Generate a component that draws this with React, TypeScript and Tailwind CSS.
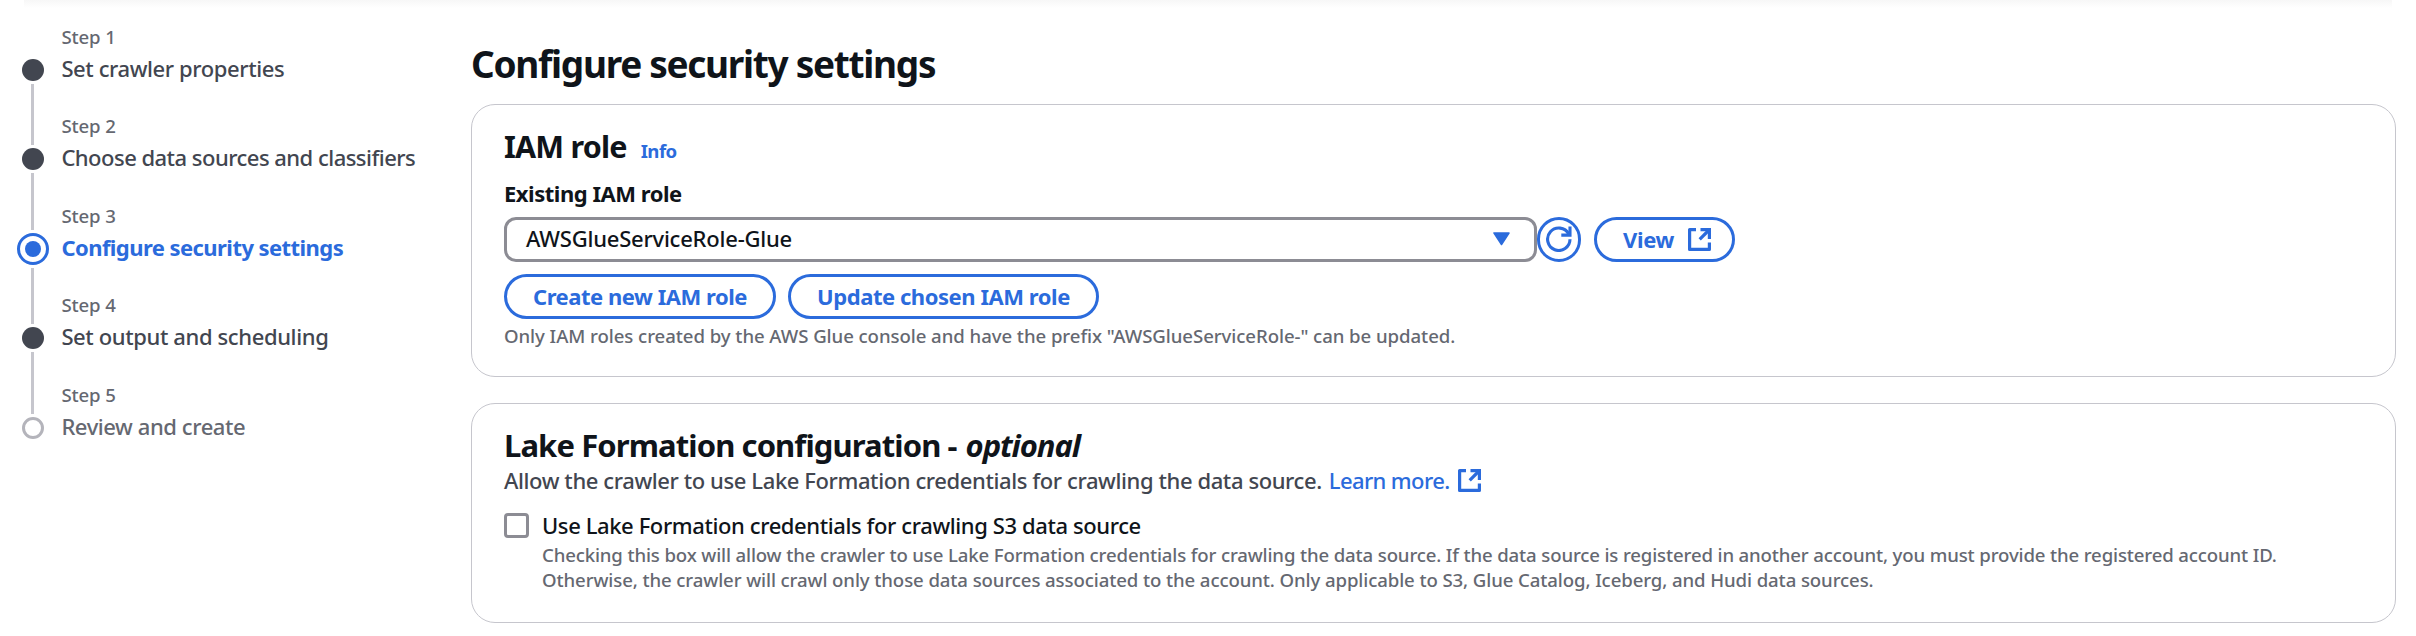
import type { ReactNode } from "react";

type StepState = "visited" | "active" | "disabled";

interface Step {
  title: string;
  state: StepState;
  titleClass: string;
}

const steps: Step[] = [
  { title: "Set crawler properties", state: "visited", titleClass: "tracking-[-0.4px]" },
  { title: "Choose data sources and classifiers", state: "visited", titleClass: "tracking-[-0.52px]" },
  { title: "Configure security settings", state: "active", titleClass: "tracking-[-0.56px]" },
  { title: "Set output and scheduling", state: "visited", titleClass: "tracking-[-0.38px]" },
  { title: "Review and create", state: "disabled", titleClass: "tracking-[-0.42px]" },
];

const titleColor: Record<StepState, string> = {
  visited: "text-[#424650] font-medium",
  active: "text-[#2b6bdc] font-bold",
  disabled: "text-[#656871] font-medium",
};

function Marker({ state }: { state: StepState }) {
  if (state === "active") {
    return (
      <span className="my-[3px] flex size-8 shrink-0 items-center justify-center rounded-full border-[3px] border-[#2b6bdc]">
        <span className="size-4 rounded-full bg-[#2b6bdc]" />
      </span>
    );
  }
  if (state === "disabled") {
    return <span className="my-[3px] size-[22px] shrink-0 rounded-full border-[3px] border-[#b4b4bb]" />;
  }
  return <span className="my-[3px] size-[22px] shrink-0 rounded-full bg-[#424650]" />;
}

function StepRow({ step, index }: { step: Step; index: number }) {
  const first = index === 0;
  const last = index === steps.length - 1;
  return (
    <li className="flex h-[89.5px] gap-[12.4px]">
      <div className="flex w-8 flex-col items-center">
        <span
          className={`mr-px w-[3px] shrink-0 ${step.state === "active" ? "h-[27.2px]" : "h-[32.2px]"} ${first ? "" : "bg-[#c6c6cd]"}`}
        />
        <Marker state={step.state} />
        <span className={`mr-px w-[3px] flex-1 ${last ? "" : "bg-[#c6c6cd]"}`} />
      </div>
      <div className="whitespace-nowrap">
        <div className="text-[18.6px] leading-[26px] font-medium tracking-[-0.1px] text-[#656871]">Step {index + 1}</div>
        <div className={`mt-[3.2px] text-[22px] leading-[31px] ${titleColor[step.state]} ${step.titleClass}`}>
          {step.title}
        </div>
      </div>
    </li>
  );
}

function ExternalIcon() {
  return (
    <svg viewBox="0 0 23 23" fill="none" stroke="currentColor" strokeWidth="3.2" className="size-[23px] shrink-0">
      <path d="M8 1.6H1.6V21.4H21.4V14.5" strokeLinejoin="round" />
      <path d="M12.5 1.6H21.4V11" />
      <path d="M11.7 11.3L21 2" />
    </svg>
  );
}

function RefreshIcon() {
  return (
    <svg viewBox="0 0 26 26" fill="none" stroke="currentColor" strokeWidth="3.1" className="size-[26px] shrink-0">
      <path d="M24 13.3A11.2 11.2 0 1 1 22.7 8" />
      <path d="M24 0.5V9.1H15.3" />
    </svg>
  );
}

function PillButton({ children, className }: { children: ReactNode; className: string }) {
  return (
    <button
      className={`flex h-[45px] items-center rounded-full border-[3px] border-[#2b6bdc] text-[22px] leading-[31px] font-bold whitespace-nowrap text-[#2b6bdc] ${className}`}
    >
      {children}
    </button>
  );
}

export default function App() {
  return (
    <div className="h-[636px] w-[2416px] overflow-hidden bg-white font-['Noto_Sans','Open_Sans',sans-serif] text-[#0f141a]">
      <div className="mx-6 h-2 bg-linear-to-b from-[#f7f7f7] to-white" />
      <div className="flex">
        <ol className="w-[454px] shrink-0 pt-[15.8px] pl-[17px]">
          {steps.map((step, i) => (
            <StepRow key={step.title} step={step} index={i} />
          ))}
        </ol>

        <main className="ml-[17px] w-[1925px] pt-[32.6px] whitespace-nowrap">
          <h1 className="text-[37px] leading-[46px] font-bold tracking-[-1.3px]">Configure security settings</h1>

          <section className="mt-[17.4px] h-[273px] rounded-[24px] border border-[#c6c6cd] pt-[23px] pl-8">
            <div className="flex h-9 items-baseline gap-[14px]">
              <h2 className="text-[30.5px] leading-9 font-bold tracking-[-0.8px]">IAM role</h2>
              <a className="text-[18.6px] leading-[26px] font-bold tracking-[-0.55px] text-[#2b6bdc]">Info</a>
            </div>
            <div className="mt-[14px] text-[22px] leading-[31px] font-bold tracking-[-0.48px]">Existing IAM role</div>
            <div className="mt-2 flex">
              <div className="flex h-[45px] w-[1033px] items-center justify-between rounded-[12px] border-[3px] border-[#8c8c94] pr-6 pl-[19px] text-[22px] leading-[31px] font-medium tracking-[-0.22px]">
                <span className="pb-[2px]">AWSGlueServiceRole-Glue</span>
                <svg viewBox="0 0 17 14" className="h-[14px] w-[17px] text-[#2b6bdc]" fill="currentColor">
                  <path d="M1 1H16L8.5 12.5Z" stroke="currentColor" strokeWidth="1.5" strokeLinejoin="round" />
                </svg>
              </div>
              <PillButton className="w-[44px] justify-center">
                <RefreshIcon />
              </PillButton>
              <PillButton className="ml-[13px] w-[141px] gap-[14px] pl-[26px] tracking-[-0.35px]">
                <span>View</span>
                <ExternalIcon />
              </PillButton>
            </div>
            <div className="mt-3 flex gap-3">
              <PillButton className="w-[272px] justify-center tracking-[-0.47px]">Create new IAM role</PillButton>
              <PillButton className="w-[311px] justify-center tracking-[-0.45px]">Update chosen IAM role</PillButton>
            </div>
            <p className="mt-1 text-[18.6px] leading-[25px] font-medium tracking-[-0.06px] text-[#656871]">
              Only IAM roles created by the AWS Glue console and have the prefix "AWSGlueServiceRole-" can be updated.
            </p>
          </section>

          <section className="mt-[26px] h-[220px] rounded-[24px] border border-[#c6c6cd] pt-[22.7px] pl-8">
            <h2 className="flex gap-[9px] text-[31px] leading-9 font-bold tracking-[-0.9px]">
              <span>Lake Formation configuration -</span>
              <i className="font-bold tracking-[-1.1px]">optional</i>
            </h2>
            <p className="mt-[2px] flex items-center text-[22px] leading-[31px] font-medium tracking-[-0.4px] text-[#424650]">
              <span>Allow the crawler to use Lake Formation credentials for crawling the data source.</span>
              <a className="ml-[7px] flex items-center gap-2 tracking-[-0.62px] text-[#2b6bdc]">
                Learn more.
                <ExternalIcon />
              </a>
            </p>
            <div className="mt-[14.3px] flex gap-[13px]">
              <span className="mt-[3px] size-[25px] shrink-0 rounded-[4px] border-[3px] border-[#8c8c94]" />
              <div>
                <div className="text-[22px] leading-[31px] font-medium tracking-[-0.4px]">
                  Use Lake Formation credentials for crawling S3 data source
                </div>
                <p className="mt-[1.3px] text-[18.6px] leading-[25px] font-medium tracking-[-0.14px] text-[#656871]">
                  Checking this box will allow the crawler to use Lake Formation credentials for crawling the data source. If the data source is registered in another account, you must provide the registered account ID.
                  <br />
                  <span className="tracking-[-0.1px]">
                    Otherwise, the crawler will crawl only those data sources associated to the account. Only applicable to S3, Glue Catalog, Iceberg, and Hudi data sources.
                  </span>
                </p>
              </div>
            </div>
          </section>
        </main>
      </div>
    </div>
  );
}
